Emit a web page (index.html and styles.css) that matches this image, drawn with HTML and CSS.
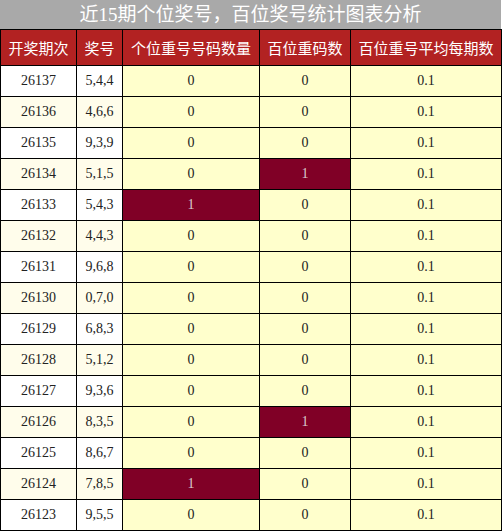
FILE: index.html
```html
<!DOCTYPE html>
<html lang="zh-CN">
<head>
    <meta charset="UTF-8">
    <title>近15期个位奖号，百位奖号统计图表分析</title>
    <link rel="stylesheet" href="styles.css">
</head>
<body>

<div class="title">近15期个位奖号，百位奖号统计图表分析</div>

<table class="stats">
    <colgroup>
        <col class="c-issue">
        <col class="c-num">
        <col class="c-ones">
        <col class="c-hund">
        <col class="c-avg">
    </colgroup>
    <thead>
        <tr>
            <th>开奖期次</th>
            <th>奖号</th>
            <th>个位重号号码数量</th>
            <th>百位重码数</th>
            <th>百位重号平均每期数</th>
        </tr>
    </thead>
    <tbody>
        <tr><td>26137</td><td>5,4,4</td><td>0</td><td>0</td><td>0.1</td></tr>
        <tr class="alt"><td>26136</td><td>4,6,6</td><td>0</td><td>0</td><td>0.1</td></tr>
        <tr><td>26135</td><td>9,3,9</td><td>0</td><td>0</td><td>0.1</td></tr>
        <tr class="alt"><td>26134</td><td>5,1,5</td><td>0</td><td class="hit">1</td><td>0.1</td></tr>
        <tr><td>26133</td><td>5,4,3</td><td class="hit">1</td><td>0</td><td>0.1</td></tr>
        <tr class="alt"><td>26132</td><td>4,4,3</td><td>0</td><td>0</td><td>0.1</td></tr>
        <tr><td>26131</td><td>9,6,8</td><td>0</td><td>0</td><td>0.1</td></tr>
        <tr class="alt"><td>26130</td><td>0,7,0</td><td>0</td><td>0</td><td>0.1</td></tr>
        <tr><td>26129</td><td>6,8,3</td><td>0</td><td>0</td><td>0.1</td></tr>
        <tr class="alt"><td>26128</td><td>5,1,2</td><td>0</td><td>0</td><td>0.1</td></tr>
        <tr><td>26127</td><td>9,3,6</td><td>0</td><td>0</td><td>0.1</td></tr>
        <tr class="alt"><td>26126</td><td>8,3,5</td><td>0</td><td class="hit">1</td><td>0.1</td></tr>
        <tr><td>26125</td><td>8,6,7</td><td>0</td><td>0</td><td>0.1</td></tr>
        <tr class="alt"><td>26124</td><td>7,8,5</td><td class="hit">1</td><td>0</td><td>0.1</td></tr>
        <tr><td>26123</td><td>9,5,5</td><td>0</td><td>0</td><td>0.1</td></tr>
    </tbody>
</table>

</body>
</html>
```

FILE: styles.css
```css
body {
    margin: 0;
    padding: 0;
    background: #fff;
    font-family: "Liberation Serif", "Noto Sans CJK SC", serif;
    color: #222;
}
.title {
    width: 501px;
    height: 29px;
    line-height: 29px;
    background-color: #a9a9a9;
    color: #fff;
    font-size: 19px;
    text-align: center;
    font-family: "Liberation Serif", "Noto Sans CJK SC", sans-serif;
}
.stats {
    width: 501px;
    border-collapse: collapse;
    table-layout: fixed;
    font-size: 14px;
}
.c-issue { width: 76px; }
.c-num { width: 46px; }
.c-ones { width: 137px; }
.c-hund { width: 91px; }
.c-avg { width: 151px; }
.stats th,
.stats td {
    border: 1px solid #000;
    text-align: center;
    padding: 0;
}
.stats th {
    height: 35px;
    background-color: #b22222;
    color: #fff;
    font-weight: normal;
    font-size: 15px;
    font-family: "Noto Sans CJK SC", sans-serif;
}
.stats td {
    height: 30px;
    background-color: #ffffcc;
}
.stats td:nth-child(1),
.stats td:nth-child(2) {
    background-color: #fff;
}
.stats tr.alt td:nth-child(1),
.stats tr.alt td:nth-child(2) {
    background-color: #fffdeb;
}
.stats td.hit {
    background-color: #800026;
    color: #d8c8cc;
}
```
